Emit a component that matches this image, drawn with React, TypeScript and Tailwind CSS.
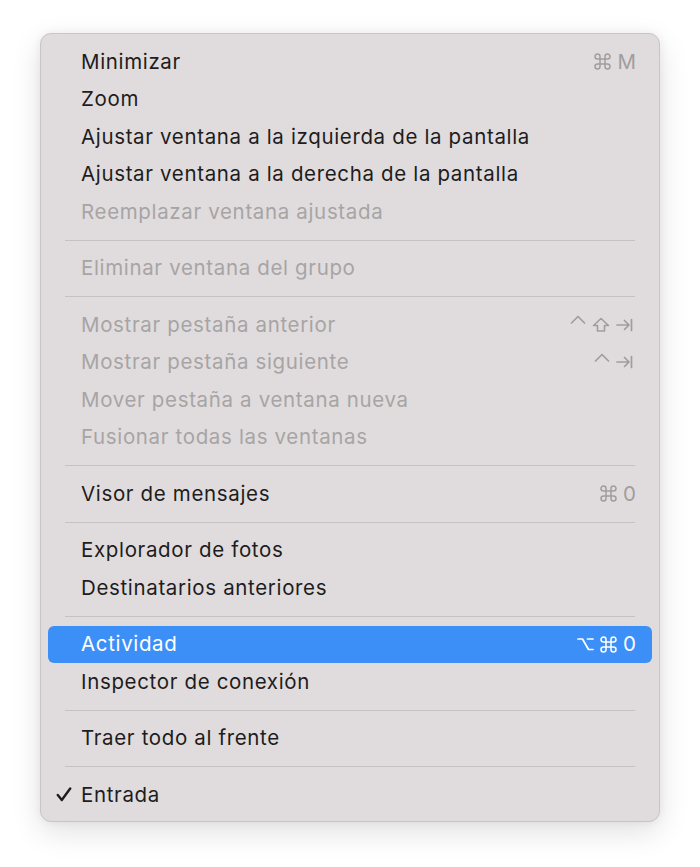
import React from "react";

type Key = "cmd" | "ctrl" | "shift" | "tab" | "opt" | string;

type Item = {
  label?: string;
  keys?: Key[];
  disabled?: boolean;
  active?: boolean;
  checked?: boolean;
  sep?: boolean;
};

const items: Item[] = [
  { label: "Minimizar", keys: ["cmd", "M"] },
  { label: "Zoom" },
  { label: "Ajustar ventana a la izquierda de la pantalla" },
  { label: "Ajustar ventana a la derecha de la pantalla" },
  { label: "Reemplazar ventana ajustada", disabled: true },
  { sep: true },
  { label: "Eliminar ventana del grupo", disabled: true },
  { sep: true },
  { label: "Mostrar pestaña anterior", keys: ["ctrl", "shift", "tab"], disabled: true },
  { label: "Mostrar pestaña siguiente", keys: ["ctrl", "tab"], disabled: true },
  { label: "Mover pestaña a ventana nueva", disabled: true },
  { label: "Fusionar todas las ventanas", disabled: true },
  { sep: true },
  { label: "Visor de mensajes", keys: ["cmd", "0"] },
  { sep: true },
  { label: "Explorador de fotos" },
  { label: "Destinatarios anteriores" },
  { sep: true },
  { label: "Actividad", keys: ["opt", "cmd", "0"], active: true },
  { label: "Inspector de conexión" },
  { sep: true },
  { label: "Traer todo al frente" },
  { sep: true },
  { label: "Entrada", checked: true },
];

function KeyGlyph({ k }: { k: Key }) {
  const common = {
    fill: "none",
    stroke: "currentColor",
    strokeWidth: 1.7,
    strokeLinecap: "round" as const,
    strokeLinejoin: "round" as const,
  };
  if (k === "ctrl")
    return (
      <svg width="16" height="16" viewBox="0 0 16 16" className="-mt-[5px]">
        <path d="M1.5 9 L8 2.5 L14.5 9" {...common} />
      </svg>
    );
  if (k === "shift")
    return (
      <svg width="18" height="16" viewBox="0 0 18 16">
        <path d="M9 1.5 L16.5 8.5 H12.5 V14 H5.5 V8.5 H1.5 Z" {...common} strokeWidth={1.6} />
      </svg>
    );
  if (k === "tab")
    return (
      <svg width="20" height="14" viewBox="0 0 20 14">
        <path d="M1 7 H13 M8.5 2.5 L13 7 L8.5 11.5 M15.5 1.5 V12.5" {...common} />
      </svg>
    );
  if (k === "opt")
    return (
      <svg width="17" height="14" viewBox="0 0 17 14">
        <path d="M1 2 H5.5 L11.5 12.5 H16 M10.5 2 H16" {...common} />
      </svg>
    );
  if (k === "cmd")
    return (
      <svg width="17" height="17" viewBox="0 0 17 17">
        <path
          d="M6 6 V3.5 A2.5 2.5 0 1 0 3.5 6 H13.5 A2.5 2.5 0 1 0 11 3.5 V13.5 A2.5 2.5 0 1 0 13.5 11 H3.5 A2.5 2.5 0 1 0 6 13.5 Z"
          {...common}
          strokeWidth={1.5}
        />
      </svg>
    );
  return <span className="text-[20.5px] leading-none">{k}</span>;
}

function Check() {
  return (
    <svg width="16" height="15" viewBox="0 0 16 15" className="absolute left-[-25px] top-[2px]">
      <path
        d="M1.8 8 L5.8 13 L14.2 1.5"
        fill="none"
        stroke="#1e1c1d"
        strokeWidth="2.4"
        strokeLinecap="round"
        strokeLinejoin="round"
      />
    </svg>
  );
}

function Row({ item }: { item: Item }) {
  const text = item.active
    ? "text-white"
    : item.disabled
    ? "text-[#a7a4a5]"
    : "text-[#1e1c1d]";
  const sc = item.active ? "text-white" : "text-[#a09d9e]";
  return (
    <div
      className={`flex h-[37.5px] items-center rounded-[6px] pl-[33px] pr-[16px] ${
        item.active ? "bg-[#3d8ff8]" : ""
      }`}
    >
      <div className="relative flex-1 text-[20.5px] leading-none tracking-[0.65px]">
        {item.checked && <Check />}
        <span className={text}>{item.label}</span>
      </div>
      {item.keys && (
        <div className={`flex items-center gap-[6px] ${sc}`}>
          {item.keys.map((k, i) => (
            <KeyGlyph key={i} k={k} />
          ))}
        </div>
      )}
    </div>
  );
}

export default function App() {
  return (
    <div
      className="flex h-[867px] w-[700px] items-start justify-center bg-white pt-[33px]"
      style={{ fontFamily: "Inter, 'DejaVu Sans', sans-serif" }}
    >
      <div className="w-[620px] rounded-[11px] border border-[#c9c5c6] bg-[#e0dcdd] px-[7px] pt-[9px] pb-[7px] shadow-[0_10px_30px_rgba(0,0,0,0.12),0_0_10px_rgba(0,0,0,0.06)]">
        {items.map((it, i) =>
          it.sep ? (
            <div key={i} className="flex h-[19px] items-center px-[17px]">
              <div className="h-px w-full bg-[#c6c2c3]" />
            </div>
          ) : (
            <Row key={i} item={it} />
          )
        )}
      </div>
    </div>
  );
}
